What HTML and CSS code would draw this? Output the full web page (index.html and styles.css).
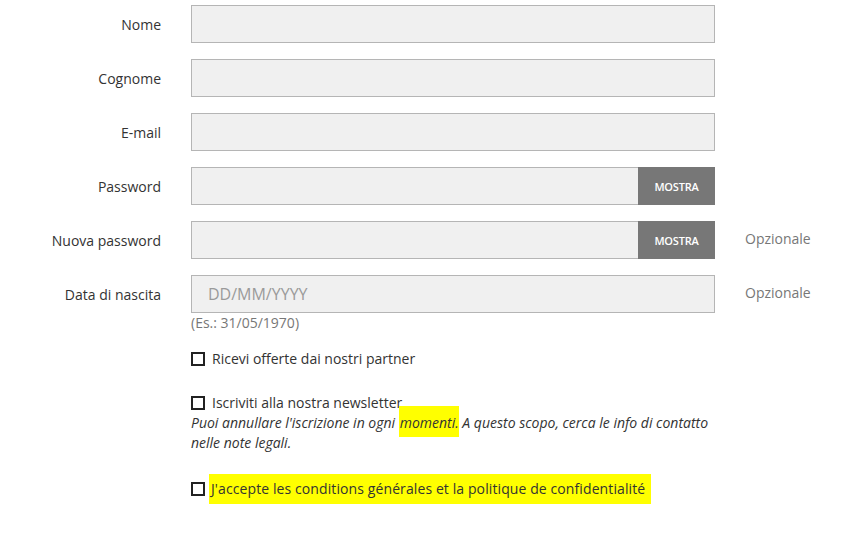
FILE: index.html
```html
<!DOCTYPE html>
<html lang="it">
<head>
<meta charset="utf-8">
<link rel="stylesheet" href="styles.css">
</head>
<body>
<form class="form">
  <label class="lbl">Nome</label>
  <div class="field"><div class="input"></div></div>
  <div></div>

  <label class="lbl">Cognome</label>
  <div class="field"><div class="input"></div></div>
  <div></div>

  <label class="lbl">E-mail</label>
  <div class="field"><div class="input"></div></div>
  <div></div>

  <label class="lbl">Password</label>
  <div class="field"><div class="input with-btn"><span class="btn">MOSTRA</span></div></div>
  <div></div>

  <label class="lbl">Nuova password</label>
  <div class="field"><div class="input with-btn"><span class="btn">MOSTRA</span></div></div>
  <div class="opt">Opzionale</div>

  <label class="lbl">Data di nascita</label>
  <div class="field">
    <div class="input"><span class="ph">DD/MM/YYYY</span></div>
    <div class="hint">(Es.: 31/05/1970)</div>
    <div class="check c1"><span class="box"></span><span>Ricevi offerte dai nostri partner</span></div>
    <div class="check c2"><span class="box"></span><span>Iscriviti alla nostra newsletter</span></div>
    <p class="note">Puoi annullare l'iscrizione in ogni <mark class="hl hl-word">momenti.</mark> A questo scopo, cerca le info di contatto nelle note legali.</p>
    <div class="check c3"><span class="box"></span><mark class="hl hl-line">J'accepte les conditions générales et la politique de confidentialité</mark></div>
  </div>
  <div class="opt">Opzionale</div>
</form>
</body>
</html>
```
FILE: styles.css
```css
* { box-sizing: border-box; }
html, body { margin: 0; background: #fff; }
body {
  font-family: "Open Sans", "Liberation Sans", sans-serif;
  color: #333;
  font-size: 14px;
}
.form {
  display: grid;
  grid-template-columns: 161px 524px auto;
  column-gap: 30px;
  row-gap: 16px;
  padding-top: 5px;
  align-items: start;
}
.lbl {
  text-align: right;
  height: 38px;
  line-height: 38px;
  padding-top: 1px;
  font-size: 14px;
  color: #333;
}
.input {
  height: 38px;
  background: #f0f0f0;
  border: 1px solid #b5b5b5;
  display: flex;
  align-items: center;
  justify-content: flex-end;
}
.btn {
  width: 77px;
  height: 38px;
  margin: -1px -1px -1px 0;
  background: #777;
  color: #fff;
  font-size: 11px;
  font-weight: 600;
  letter-spacing: -0.2px;
  display: flex;
  align-items: center;
  justify-content: center;
}
.ph {
  margin-right: auto;
  padding-left: 16px;
  font-size: 16px;
  color: #9a9a9a;
}
.opt {
  height: 38px;
  line-height: 36px;
  font-size: 14px;
  color: #777;
}
.hint {
  font-size: 14px;
  color: #777;
  line-height: 18px;
  margin-top: 1px;
}
.check {
  display: flex;
  align-items: center;
  gap: 7px;
  font-size: 14px;
  line-height: 20px;
}
.c1 { margin-top: 17px; }
.c2 { margin-top: 24px; }
.c3 { margin-top: 21px; }
.box {
  width: 14px;
  height: 14px;
  border: 2px solid #222;
  flex: none;
}
.note {
  margin: 0;
  font-style: italic;
  font-size: 14px;
  line-height: 20px;
  color: #333;
  padding-right: 6px;
}
.hl {
  background: #ffff00;
  color: #333;
}
.hl-word {
  padding: 7px 0 5px 1px;
}
.hl-line {
  padding: 5px 6px 5px 2px;
  margin-left: -3px;
  letter-spacing: 0.1px;
}
```
